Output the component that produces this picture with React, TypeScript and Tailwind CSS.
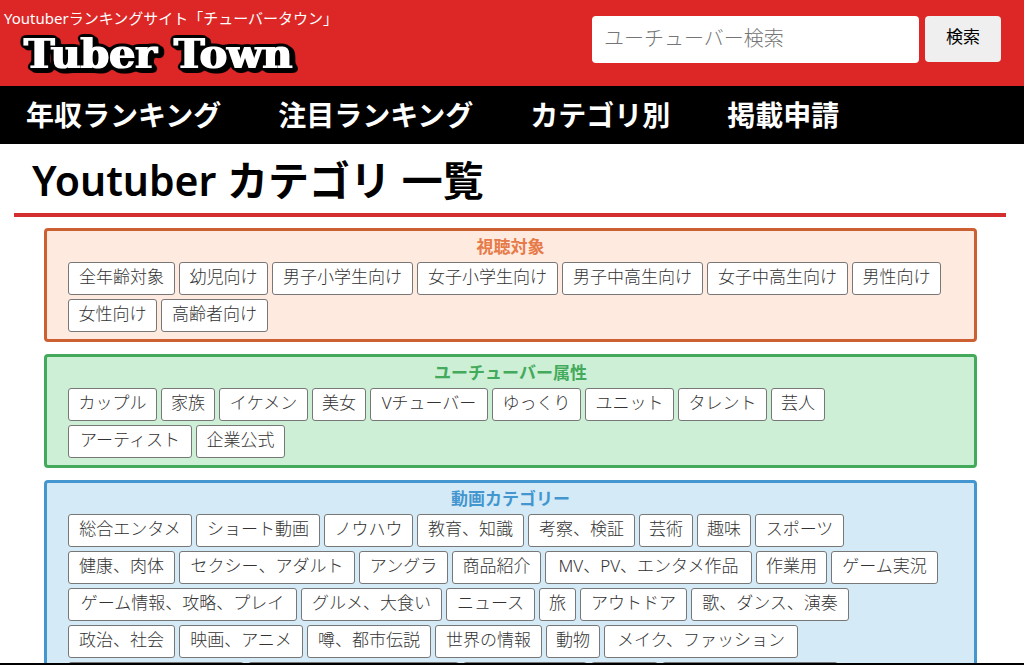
import clsx from 'clsx';

const NAV_LINKS = ['年収ランキング', '注目ランキング', 'カテゴリ別', '掲載申請'];

// Chips line up by label length, one width per length
const WIDTHS = {
  1: 'w-[37px]',
  2: 'w-[54px]',
  3: 'w-[71px]',
  4: 'w-[89px]',
  5: 'w-[107px]',
  6: 'w-[124px]',
  7: 'w-[141px]',
  8: 'w-[158px]',
  9: 'w-[176px]',
  10: 'w-[194px]',
  12: 'w-[229px]',
} as Record<number, string>;

// Labels with Latin letters, where the length says little about the width
const LATIN_WIDTHS: Record<string, string> = {
  'Vチューバー': 'w-[118px]',
  'MV、PV、エンタメ作品': 'w-[207px]',
};

const GROUPS = [
  {
    title: '視聴対象',
    box: 'border-[#cc6033] bg-[#ffeadf]',
    heading: 'text-[#e67a48]',
    labels: [
      '全年齢対象', '幼児向け', '男子小学生向け', '女子小学生向け', '男子中高生向け',
      '女子中高生向け', '男性向け', '女性向け', '高齢者向け',
    ],
  },
  {
    title: 'ユーチューバー属性',
    box: 'border-[#43aa5c] bg-[#cdefd5]',
    heading: 'text-[#43aa5c]',
    labels: [
      'カップル', '家族', 'イケメン', '美女', 'Vチューバー', 'ゆっくり', 'ユニット',
      'タレント', '芸人', 'アーティスト', '企業公式',
    ],
  },
  {
    title: '動画カテゴリー',
    box: 'border-[#4496cf] bg-[#d4eaf7]',
    heading: 'text-[#4496cf]',
    labels: [
      '総合エンタメ', 'ショート動画', 'ノウハウ', '教育、知識', '考察、検証', '芸術', '趣味', 'スポーツ',
      '健康、肉体', 'セクシー、アダルト', 'アングラ', '商品紹介', 'MV、PV、エンタメ作品', '作業用', 'ゲーム実況',
      'ゲーム情報、攻略、プレイ', 'グルメ、大食い', 'ニュース', '旅', 'アウトドア', '歌、ダンス、演奏',
      '政治、社会', '映画、アニメ', '噂、都市伝説', '世界の情報', '動物', 'メイク、ファッション',
    ],
    // Not loaded yet
    pending: ['w-[176px]', 'w-[211px]', 'w-[124px]', 'w-[67px]', 'w-[176px]'],
  },
];

const CHIP = 'h-[33px] rounded-[3px] border border-[#777] bg-white';

function Logo() {
  return (
    <a href="#" aria-label="Tuber Town" className="ml-5 block">
      <svg width="284" height="44" viewBox="0 0 284 44" className="block overflow-visible" aria-hidden="true">
        <defs>
          {/* Fattens the white letters, then rings them in black with a shadow to the lower right */}
          <filter id="logo" x="-5%" y="-20%" width="110%" height="150%" colorInterpolationFilters="sRGB">
            <feMorphology in="SourceGraphic" operator="dilate" radius="1 0" result="face" />
            <feMorphology in="face" operator="dilate" radius="1" result="wide" />
            <feGaussianBlur in="wide" stdDeviation="2" result="soft" />
            <feColorMatrix in="soft" values="0 0 0 0 0  0 0 0 0 0  0 0 0 0 0  0 0 0 8 -1" result="black" />
            <feOffset in="black" dx="3" dy="2" result="shadow" />
            <feMerge>
              <feMergeNode in="shadow" />
              <feMergeNode in="black" />
              <feMergeNode in="face" />
            </feMerge>
          </filter>
        </defs>
        <text
          y="38"
          fill="#fff"
          fontSize="41"
          filter="url(#logo)"
          className="font-['DejaVu_Serif',serif] font-bold"
        >
          <tspan x="4">Tuber</tspan>
          <tspan x="154">Town</tspan>
        </text>
      </svg>
    </a>
  );
}

function Header() {
  return (
    <header className="shrink-0">
      <div className="flex h-[86px] items-start justify-between bg-[#dd2726] pr-[23px]">
        <div>
          <p className="pt-1.5 pl-1 text-[15px] leading-6 text-white">Youtuberランキングサイト「チューバータウン」</p>
          <Logo />
        </div>
        <form className="flex items-start gap-1.5 pt-4" onSubmit={(e) => e.preventDefault()}>
          <input
            type="search"
            aria-label="ユーチューバー検索"
            placeholder="ユーチューバー検索"
            className="h-[47px] w-[327px] rounded bg-white px-3 pb-0.5 text-xl font-light placeholder:text-[#757575]"
          />
          <button type="submit" className="h-[46px] w-[76px] rounded bg-[#efefef] pb-1 text-[17px] text-black">
            検索
          </button>
        </form>
      </div>
      <nav className="flex h-[58px] items-center gap-[57px] bg-black px-[26px] text-[28px] leading-none font-bold text-white">
        {NAV_LINKS.map((label) => (
          <a key={label} href="#">{label}</a>
        ))}
      </nav>
    </header>
  );
}

export default function App() {
  return (
    <div className="flex h-screen flex-col overflow-hidden border-b-2 border-black bg-white font-['Noto_Sans','Noto_Sans_CJK_JP',sans-serif]">
      <Header />
      <main className="min-h-0 flex-1 overflow-hidden pr-[18px] pl-[14px]">
        <h1 className="border-b-4 border-[#d32f2f] pt-1 pl-[18px] text-[41px] leading-[65px] font-semibold text-black">
          Youtuber カテゴリ 一覧
        </h1>
        <div className="flex flex-col gap-3 pt-[11px] pr-[29px] pl-[30px]">
          {GROUPS.map((group) => (
            <section key={group.title} className={clsx('rounded border-3 pb-[7px]', group.box)}>
              <h2 className={clsx('h-[31px] text-center text-[17px] leading-[31px] font-bold', group.heading)}>
                {group.title}
              </h2>
              <div className="flex flex-wrap gap-1 pr-[30px] pl-[21px]">
                {group.labels.map((label) => (
                  <a
                    key={label}
                    href="#"
                    className={clsx(
                      CHIP,
                      'text-center text-[17px] leading-7 font-light whitespace-nowrap text-[#333]',
                      LATIN_WIDTHS[label] ?? WIDTHS[label.length],
                    )}
                  >
                    {label}
                  </a>
                ))}
                {group.pending?.map((width, i) => (
                  <span key={i} className={clsx(CHIP, width)} />
                ))}
              </div>
            </section>
          ))}
        </div>
      </main>
    </div>
  );
}
